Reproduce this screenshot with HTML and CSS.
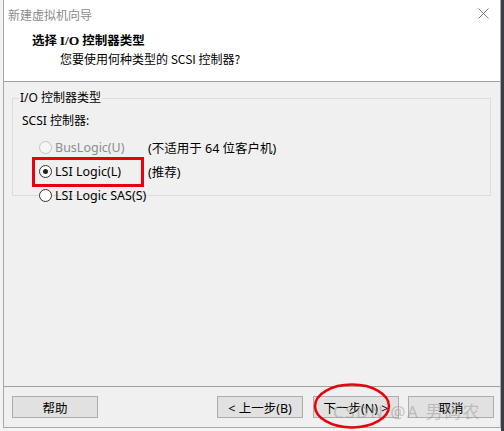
FILE: index.html
```html
<!DOCTYPE html>
<html>
<head>
<meta charset="utf-8">
<link rel="stylesheet" href="styles.css">
</head>
<body>
<div class="window">
  <div class="header">
    <div class="titlebar">
      <span class="title">新建虚拟机向导</span>
      <svg class="close" width="11" height="11" viewBox="0 0 11 11"><path d="M0.5 0.5L10.5 10.5M10.5 0.5L0.5 10.5" stroke="#7a7a7a" stroke-width="1" fill="none"/></svg>
    </div>
    <div class="h-title">选择 <span class="serif">I/O</span> 控制器类型</div>
    <div class="h-sub">您要使用何种类型的 SCSI 控制器?</div>
  </div>
  <div class="content">
    <fieldset class="group">
      <legend>I/O 控制器类型</legend>
      <div class="label">SCSI 控制器:</div>
      <div class="row disabled"><span class="radio"></span><span class="opt">BusLogic(U)</span><span class="note">(不适用于 64 位客户机)</span></div>
      <div class="row"><span class="radio checked"></span><span class="opt">LSI Logic(L)</span><span class="note">(推荐)</span></div>
      <div class="row"><span class="radio"></span><span class="opt">LSI Logic SAS(S)</span></div>
    </fieldset>
  </div>
  <div class="footer">
    <button class="btn">帮助</button>
    <div class="spacer"></div>
    <button class="btn">&lt; 上一步(B)</button>
    <button class="btn next">下一步(N) &gt;</button>
    <button class="btn cancel">取消</button>
  </div>
</div>
<div class="strip"></div>
<div class="redbox"></div>
<svg class="ellipse" width="80" height="50" viewBox="0 0 80 50"><ellipse cx="40" cy="25" rx="37" ry="21.5" fill="none" stroke="#e8000b" stroke-width="2.5"/></svg>
<div class="watermark">CSDN @A 男码农</div>
</body>
</html>
```

FILE: styles.css
```css
html, body { margin: 0; padding: 0; }
body {
  width: 504px; height: 431px; overflow: hidden;
  background: #f3f3f3;
  display: flex;
  position: relative;
  font-family: "Noto Sans", "Noto Sans CJK SC", sans-serif;
  font-size: 12px;
  color: #000;
}
.window {
  margin-left: 3px;
  width: 496px; height: 427px;
  border-left: 1px solid #a8a8a8;
  border-right: 1px solid #a8a8a8;
  border-bottom: 1px solid #a8a8a8;
  background: #f0f0f0;
  display: flex; flex-direction: column;
}
.strip { width: 3px; height: 431px; background: #3b3f45; }
.header {
  background: #fff;
  height: 81px;
  border-bottom: 1px solid #a0a0a0;
  position: relative;
}
.titlebar { height: 28px; display: flex; align-items: center; padding-left: 4px; }
.title { color: #8a8a8a; font-size: 12px; font-family: "Noto Sans CJK SC", sans-serif; }
.close { position: absolute; right: 11px; top: 8px; }
.h-title {
  margin-left: 28px; margin-top: 4px;
  font-weight: bold; font-size: 12.5px; line-height: 16px;
  font-family: "Noto Sans CJK SC", sans-serif;
}
.serif { font-family: "Liberation Serif", serif; font-size: 13.5px; }
.h-sub { margin-left: 56px; margin-top: 2px; line-height: 16px; font-family: "Noto Sans CJK SC", sans-serif; }
.content { flex: 1; padding: 8px 9px 0 8px; border-bottom: 1px solid #a0a0a0; }
.group {
  margin: 0; padding: 0 0 2px 9px;
  border: 1px solid #dcdcdc;
  height: 102px;
}
legend { padding: 0 1px; line-height: 16px; margin-left: -3px; font-family: "Noto Sans", "Noto Sans CJK SC", sans-serif; }
.label { margin-top: 7px; line-height: 16px; }
.row { display: flex; align-items: center; height: 24px; font-size: 12.5px; }
.label + .row { margin-top: 6px; }
.radio {
  width: 11px; height: 11px; border: 1px solid #333; border-radius: 50%;
  background: #fff; margin-left: 17px; margin-right: 3px; box-sizing: content-box;
  position: relative; flex: none;
}
.radio.checked::after {
  content: ""; position: absolute; left: 3px; top: 3px; width: 5px; height: 5px;
  border-radius: 50%; background: #222;
}
.disabled .radio { border-color: #c4c4c4; background: #f6f6f6; }
.disabled .opt { color: #8d8d8d; }
.opt { width: 93px; flex: none; }
.footer {
  height: 40px; display: flex; align-items: flex-start;
  padding: 9px 6px 0 8px; box-sizing: border-box;
}
.spacer { flex: 1; }
.btn {
  width: 86px; height: 22px;
  background: #e1e1e1; border: 1px solid #adadad; border-radius: 0;
  font-family: "Noto Sans", "Noto Sans CJK SC", sans-serif; font-size: 12.5px; color: #000;
  padding: 0; margin: 0;
}
.next { margin-left: 10px; }
.cancel { margin-left: 9px; }
.redbox {
  position: absolute; left: 32px; top: 157px; width: 106px; height: 24px;
  border: 3px solid #e8000b;
}
.ellipse { position: absolute; left: 312px; top: 381px; }
.watermark {
  position: absolute; left: 333px; top: 398px;
  font-size: 17px; color: rgba(150,150,150,0.5);
  font-family: "Noto Sans", "Noto Sans CJK SC", sans-serif; letter-spacing: 1.5px;
}
```
